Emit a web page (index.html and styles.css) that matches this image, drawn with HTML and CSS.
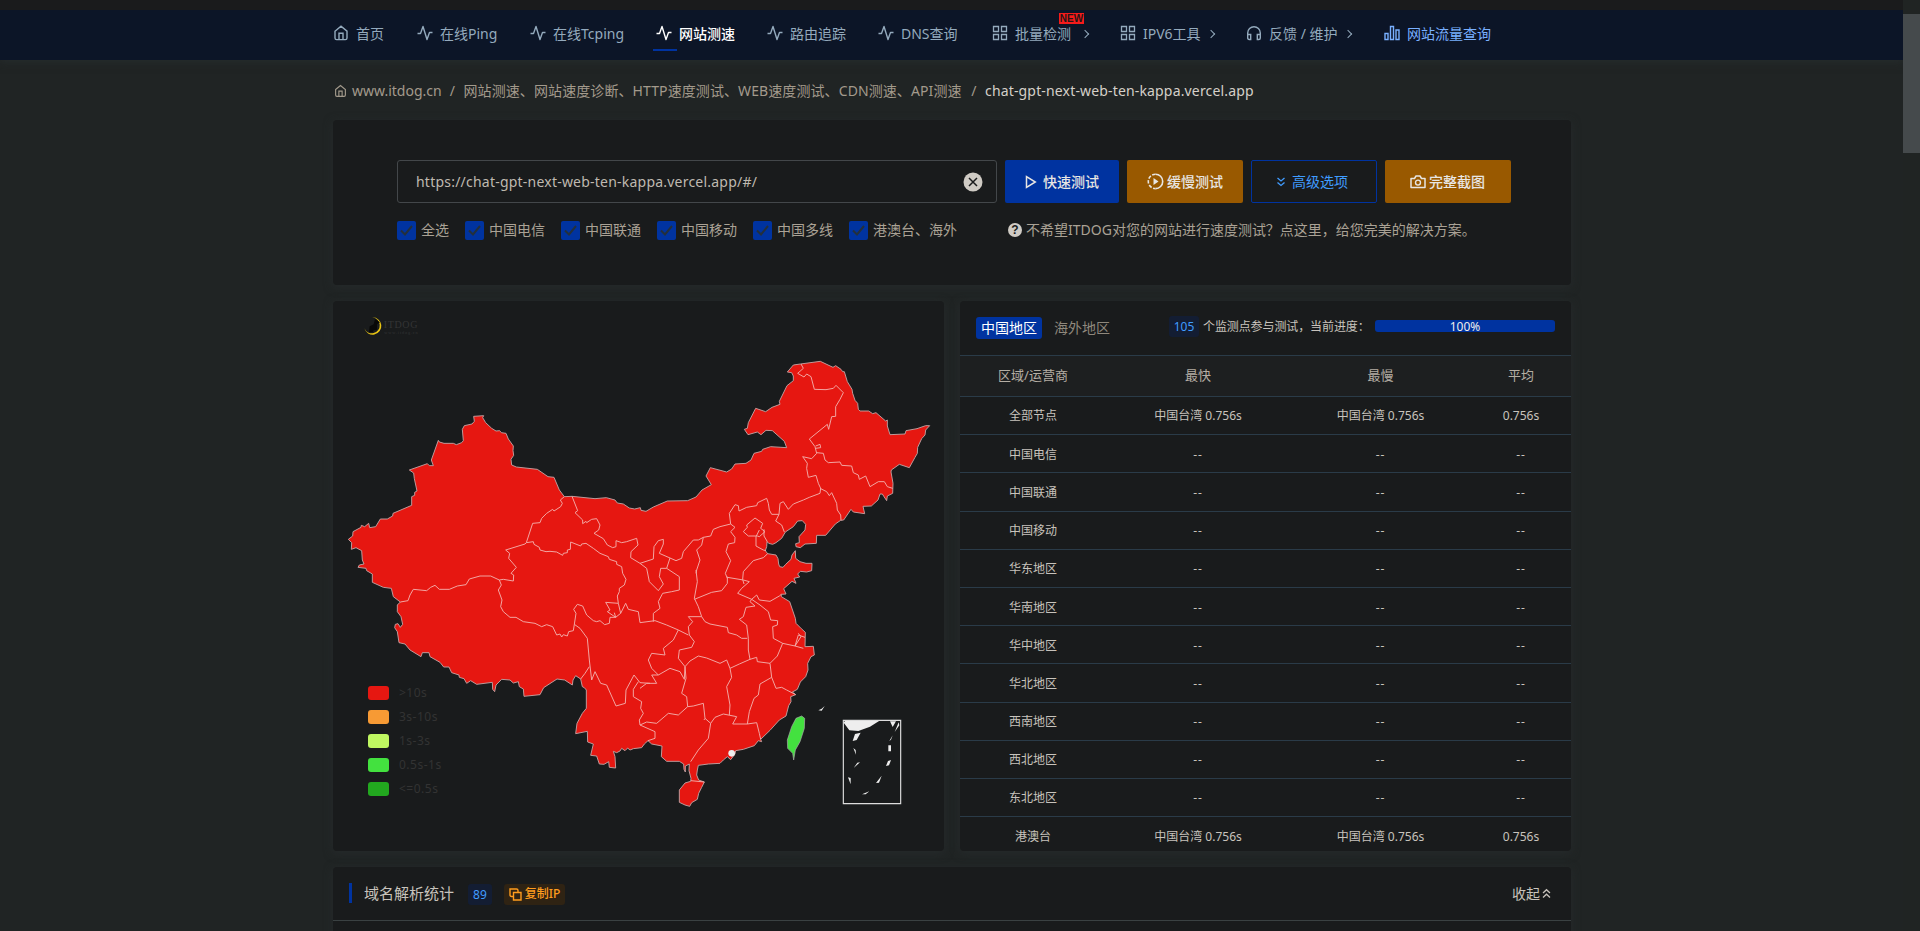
FILE: index.html
```html
<!DOCTYPE html>
<html lang="zh-CN">
<head>
<meta charset="utf-8">
<title>网站测速</title>
<link rel="stylesheet" href="styles.css">
</head>
<body>
<svg class="defs" width="0" height="0">
  <symbol id="home" viewBox="0 0 16 16"><path d="M2 6.2 8 1.2l6 5V13q0 1.6-1.6 1.6H3.600Q2 14.600 2 13zM6 14.500V8.200h4v6.300" fill="none" stroke="currentColor" stroke-width="1.400"/></symbol>
  <symbol id="pulse" viewBox="0 0 16 16"><path d="M.5 8.500h3L6 1.500l4 13 2.500-7H15.500" fill="none" stroke="currentColor" stroke-width="1.400" stroke-linejoin="round"/></symbol>
  <symbol id="grid" viewBox="0 0 16 16"><path d="M1.500 1.500h5v5h-5zM9.500 1.500h5v5h-5zM1.500 9.500h5v5h-5zM9.500 9.500h5v5h-5z" fill="none" stroke="currentColor" stroke-width="1.300"/></symbol>
  <symbol id="ear" viewBox="0 0 16 16"><path d="M1.700 12V8a6.300 6.300 0 0 1 12.600 0v4M1.700 9.500h3v5h-1.500q-1.500 0-1.500-1.500zM14.300 9.500h-3v5h1.500q1.500 0 1.500-1.500z" fill="none" stroke="currentColor" stroke-width="1.400"/></symbol>
  <symbol id="bars" viewBox="0 0 16 16"><path d="M1 8.500h3v6H1zM6.500 1.500h3v13h-3zM12 5h3v9.500h-3z" fill="none" stroke="currentColor" stroke-width="1.400"/></symbol>
  <symbol id="check" viewBox="0 0 19 19"><path d="M4 9.500 8 13.500 15 5" fill="none" stroke="#23303c" stroke-width="2"/></symbol>
</svg>
<div class="page">
<div class="content">
<header class="nav">
  <nav class="nav-list">
    <a class="item"><svg><use href="#home"/></svg><span>首页</span></a>
    <a class="item"><svg><use href="#pulse"/></svg><span>在线Ping</span></a>
    <a class="item"><svg><use href="#pulse"/></svg><span>在线Tcping</span></a>
    <a class="item active"><svg><use href="#pulse"/></svg><span>网站测速</span></a>
    <a class="item"><svg><use href="#pulse"/></svg><span>路由追踪</span></a>
    <a class="item"><svg><use href="#pulse"/></svg><span>DNS查询</span></a>
    <a class="item wide"><svg><use href="#grid"/></svg><span>批量检测</span><i class="arrow"></i><b class="new">NEW</b></a>
    <a class="item"><svg><use href="#grid"/></svg><span>IPV6工具</span><i class="arrow"></i></a>
    <a class="item"><svg><use href="#ear"/></svg><span>反馈 / 维护</span><i class="arrow"></i></a>
    <a class="item stats"><svg><use href="#bars"/></svg><span>网站流量查询</span></a>
  </nav>
</header>
<div class="crumbs"><svg><use href="#home"/></svg><span class="c1">www.itdog.cn</span><span class="sep">/</span><span class="c2">网站测速、网站速度诊断、HTTP速度测试、WEB速度测试、CDN测速、API测速</span><span class="sep">/</span><span class="c3">chat-gpt-next-web-ten-kappa.vercel.app</span></div>

<section class="card search">
  <div class="row">
    <div class="input"><span>https://chat-gpt-next-web-ten-kappa.vercel.app/#/</span>
      <svg class="clear" viewBox="0 0 20 20"><circle cx="10" cy="10" r="9.500" fill="#cfcbc4"/><path d="m6 6 8 8m0-8-8 8" stroke="#1a1b1c" stroke-width="1.500"/></svg></div>
    <button class="btn blue"><svg width="12" height="14" viewBox="0 0 12 14"><path d="M1.500 1.500v10.800L10.300 7z" fill="none" stroke="currentColor" stroke-width="1.500"/></svg>快速测试</button>
    <button class="btn orange slow"><svg width="17" height="17" viewBox="0 0 17 17"><path d="M8.500 1.200a7.200 7.200 0 0 1 0 14.400" fill="none" stroke="currentColor" stroke-width="1.600"/><path d="M8.500 1.200a7.200 7.200 0 0 0 0 14.400" fill="none" stroke="currentColor" stroke-width="1.600" stroke-dasharray="3.400 1.600"/><path d="M6.500 5v7l5-3.500z" fill="currentColor"/></svg>缓慢测试</button>
    <button class="btn outline"><svg width="10" height="12" viewBox="0 0 10 12"><path d="m1.500 2 3.500 3 3.500-3m-7 4.500L5 9.500l3.500-3" fill="none" stroke="currentColor" stroke-width="1.300"/></svg>高级选项</button>
    <button class="btn orange shot"><svg width="16" height="14" viewBox="0 0 16 14"><path d="M1 3.500h3.500l1.500-2.500h4l1.500 2.500H15V12.500H1z" fill="none" stroke="currentColor" stroke-width="1.500" stroke-linejoin="round"/><circle cx="8" cy="7.600" r="2.500" fill="none" stroke="currentColor" stroke-width="1.400"/></svg>完整截图</button>
  </div>
  <div class="options">
    <label class="first"><i><svg><use href="#check"/></svg></i>全选</label>
    <label><i><svg><use href="#check"/></svg></i>中国电信</label>
    <label><i><svg><use href="#check"/></svg></i>中国联通</label>
    <label><i><svg><use href="#check"/></svg></i>中国移动</label>
    <label><i><svg><use href="#check"/></svg></i>中国多线</label>
    <label class="last"><i><svg><use href="#check"/></svg></i>港澳台、海外</label>
    <span class="help"><b>?</b><span>不希望ITDOG对您的网站进行速度测试？点这里，给您完美的解决方案。</span></span>
  </div>
</section>

<div class="columns">
<section class="card map">
<svg class="china" viewBox="9 3 1833 1650">
  <path d="M127 52a26 26 0 1 1-24 33a24 24 0 1 0 24-33" fill="#e8c413"/>
  <path d="M117 97l2-18 12-6 4-16 6 4 9 6-9 6v16l-10 2-3 6z" fill="#080808"/>
  <text x="161" y="84" class="brand">ITDOG</text><text x="163" y="102" class="brand-url">www.itdog.cn</text>
  <path class="land" d="M55 718 68 708 69 695 93 682 94 676 104 680 116 670 119 683 137 680 151 657 172 657 188 648 189 640 245 616 245 590 254 586 254 577 261 573 253 536 251 519 238 510 292 491 298 497 310 497 304 480 325 421 328 426 342 430 370 430 379 434 395 428 400 422 397 388 403 377 426 372 433 364 431 349 461 347 458 353 467 368 485 385 498 393 509 392 514 398 528 400 535 417 550 438 549 452 551 466 543 478 545 495 559 501 622 508 654 530 672 532 688 570 703 590 726 589 795 596 829 593 855 600 862 609 880 612 898 624 914 627 931 623 933 631 948 634 970 621 1012 603 1073 602 1098 591 1116 570 1144 554 1128 528 1141 503 1190 516 1205 507 1215 492 1248 490 1263 480 1272 460 1295 454 1298 448 1322 440 1370 443 1363 424 1327 392 1308 391 1293 404 1282 396 1254 404 1243 388 1252 385 1255 368 1277 325 1307 335 1326 322 1350 313 1348 304 1371 257 1390 242 1390 228 1385 218 1372 216 1390 195 1411 192 1471 184 1509 202 1517 197 1533 208 1538 215 1543 215 1552 245 1566 268 1568 280 1575 301 1583 310 1585 328 1590 333 1616 333 1628 341 1638 338 1667 363 1672 360 1672 378 1680 404 1725 402 1728 392 1761 386 1787 377 1799 377 1787 390 1785 405 1775 416 1763 442 1762 460 1755 472 1738 503 1708 493 1684 510 1683 516 1689 550 1688 580 1672 588 1670 602 1662 590 1657 582 1650 582 1644 600 1624 618 1599 619 1604 641 1570 636 1563 628 1541 660 1532 661 1516 672 1487 706 1460 706 1459 730 1425 732 1411 743 1398 740 1397 731 1408 728 1407 710 1425 690 1427 673 1417 662 1403 663 1390 680 1366 696 1355 715 1338 728 1328 733 1316 730 1311 725 1310 740 1306 752 1313 761 1338 765 1344 776 1346 792 1349 800 1359 802 1367 793 1383 778 1386 765 1396 752 1397 775 1410 785 1428 790 1446 790 1445 812 1430 816 1411 814 1403 822 1409 831 1392 835 1398 850 1386 844 1361 866 1368 882 1354 883 1354 890 1379 905 1396 955 1398 970 1414 986 1426 997 1425 1040 1450 1039 1453 1065 1443 1070 1433 1090 1434 1110 1427 1130 1411 1146 1402 1168 1387 1176 1397 1184 1382 1190 1383 1205 1376 1217 1368 1248 1348 1260 1320 1291 1292 1318 1295 1325 1285 1322 1273 1337 1240 1348 1217 1352 1215 1362 1202 1379 1192 1370 1180 1380 1170 1390 1135 1392 1105 1396 1102 1410 1100 1425 1106 1440 1123 1446 1115 1462 1106 1480 1102 1498 1085 1508 1079 1519 1065 1515 1048 1507 1048 1470 1065 1449 1082 1444 1083 1435 1077 1412 1078 1392 1066 1398 1066 1416 1062 1408 1061 1392 1048 1384 1010 1384 994 1370 996 1338 965 1332 954 1322 943 1332 935 1343 910 1346 900 1350 893 1344 885 1352 875 1345 870 1353 860 1358 850 1354 855 1370 857 1404 838 1402 836 1385 822 1393 808 1392 800 1368 782 1366 790 1332 773 1326 772 1294 737 1301 741 1270 757 1240 769 1225 769 1170 763 1163 757 1160 752 1137 737 1127 729 1140 727 1155 704 1140 681 1137 641 1163 630 1184 582 1189 580 1167 568 1160 565 1145 550 1149 540 1140 515 1138 498 1155 494 1175 488 1168 487 1147 440 1153 422 1142 410 1150 402 1136 388 1132 387 1125 365 1118 357 1101 341 1101 330 1087 300 1070 297 1058 277 1058 273 1070 240 1050 225 1032 207 1028 202 995 194 983 196 973 204 971 211 982 218 973 213 950 202 935 202 915 211 906 190 890 184 865 160 862 127 847 127 822 110 812 108 805 84 802 88 795 102 792 97 780 95 752 78 743 64 748 65 728z"/>
  <g class="border">
    <path d="M703 590 691 600 697 610 692 620 672 633 668 628 650 640 635 655 630 668 608 670 589 728 585 732 527 750 539 760 536 775 559 802 543 820 551 825 550 843 520 838 508 840 482 828 450 828 418 837 408 854 382 858 358 868 328 868 315 856 302 862 290 872 250 868 240 885 234 902 211 906"/>
    <path d="M589 728 610 725 612 733 628 742 630 750 648 755 660 754 680 756 698 766 700 760 712 758 712 750 721 748 722 726 752 738 755 732 768 730 790 745 810 760 835 770 838 778 860 785 860 793 875 800 878 820 888 838 883 855 868 865 868 875 862 888 865 910 827 907 840 930 832 935 857 952 853 938"/>
    <path d="M865 910 872 940 857 952 840 952 838 970 824 974 810 962 800 965 790 962 770 945 758 918 742 913 731 928 738 940 733 973 730 992 716 995 712 1008 700 1004 695 1011 690 1002 680 1005 668 980 650 974 635 980 615 970 580 965 558 952 540 952 520 935 512 920 516 900 505 870 514 855 508 840"/>
    <path d="M726 589 743 632 735 638 758 660 758 671 768 664 770 668 785 658 800 656 810 675 806 690 792 700 820 716 832 735 848 743 858 740 858 722 875 728 890 725 920 715 924 735 903 755 902 773 930 790 970 777 972 740 985 722 1000 718 1000 732 988 760 1020 774 1038 782 1055 775 1060 755 1090 720 1105 720 1120 712 1142 708 1150 688 1170 680 1202 672 1198 640 1215 614 1225 617 1227 633 1250 622 1280 617 1283 608 1310 595 1315 610 1318 630 1325 643 1347 643 1350 610 1360 605 1375 628 1390 612 1420 600 1438 592 1470 580 1472 565 1465 550 1458 526 1435 532 1430 505 1432 490 1418 470 1445 476 1460 460 1455 440 1438 417 1492 373 1496 388 1505 350 1517 349 1517 320 1530 298 1540 278 1518 256 1510 265 1488 269 1453 268 1443 230 1430 222 1422 231 1403 220 1420 205 1413 192"/>
    <path d="M872 940 887 910 895 928 925 935 930 968 975 962 1010 975 1045 990 1075 1005"/>
    <path d="M930 790 950 805 958 845 985 872 1000 852 988 830 992 805 1010 805 1048 830 1048 870 1025 875 998 880 985 905 990 925 970 940 970 965M1020 774 1010 805"/>
  </g>
  <g class="border" transform="translate(930 120)">
    <path d="M530 338 550 340 555 360 565 368 600 366 605 376 635 378 640 398 655 405 658 418 677 408 690 440 715 425 733 425 742 440 758 445M527 318 540 313 542 323 527 325"/>
    <path d="M540 445 560 455 568 467 575 458 590 490 592 510 602 525 603 541M417 523 407 543 425 555 433 576"/>
    <path d="M345 534 368 550 362 565 375 575 358 590 352 588 325 588 310 575 322 562 320 555zM372 568 372 588 382 605M358 570 348 590 348 618 370 630 378 632M383 641 370 653 340 662 310 695 308 718"/>
    <path d="M272 552 285 562 272 575 285 592 284 608 265 612 258 635 272 662 256 700 262 715M190 592 185 615 170 630 180 660 170 690 168 700"/>
  </g>
  <g class="border" transform="translate(930 780)">
    <path d="M168 30 172 65 163 115 175 140 185 170 145 170 158 185 145 200 148 225 163 245 155 262 118 270 115 295 135 320 133 358 120 335 90 325 55 345 35 325 25 300 35 280 75 285 70 265 100 240 115 210"/>
    <path d="M163 118 215 97 245 92 262 70 262 50M262 52 310 60 328 65 305 85 293 100 335 118 350 105 358 120 390 124 418 108 424 103M308 58 312 72"/>
    <path d="M185 170 195 185 210 192 262 202 265 218 290 225 305 235 322 235M335 118 330 125 345 138 318 142 310 170 298 178 320 195 325 235 325 270 330 298M335 118 360 135 385 155 392 180 413 182 412 195 398 200 400 235 428 250 465 258 475 225 495 232M475 220 483 230 465 258 490 265M428 250 412 288 390 310 395 352 408 385 425 382 440 390 467 404"/>
    <path d="M135 320 150 303 175 288 200 294 240 310 260 300 270 325 298 312 330 298 350 292 352 305 390 310M270 325 275 352 260 380 270 435 268 465M395 352 360 372 355 405 342 415 328 455 322 492 350 488 358 520 362 538"/>
    <path d="M135 320 138 355 125 400 140 410 143 440 160 438 190 430 195 475 212 490 225 472 250 462 290 470 278 492 322 492M195 475 192 480M212 490 205 535 175 570 152 605M143 440 115 465 85 460 50 490 20 486 0 495 45 515 45 535 24 542M55 345 35 345 50 370 20 370 0 385"/>
    <path d="M30 370 0 368-18 345-42 390-44 430-72 438-100 375-118 370-135 335-145 360-152 300-158 235-180 205-197 193M-152 320-165 340-178 357M-5 365-20 388-20 410 5 425 2 445 10 460-2 480 0 495"/>
    <path d="M153 662 193 666"/>
  </g>
  <g transform="translate(930 780)">
    <path d="M485 468 494 475 493 505 480 545 466 570 461 600 458 580 443 565 442 540 455 500 468 475z" fill="#43e13f" stroke="#aaa" stroke-width="2"/>
    <path d="M535 451 545 446 554 438 545 452z" fill="#eee"/><circle cx="275" cy="580" r="10" fill="#eee"/><path d="M610 487 621 480H722L690 500 655 513 628 511zM750 484H768L758 501zM764 516 776 487 778 496zM638 543 645 522 662 518 650 540zM748 543 758 526 753 539zM745 556h8v18h-8zM640 564 647 570 648 584zM641 624 652 608 660 607zM738 618 744 603 753 600 747 616zM624 652 632 654 632 673zM708 669 725 647 717 668zM666 703 688 694 677 703z" fill="#eee"/>
    <path d="M610 481H782V731H610z" fill="none" stroke="#ddd" stroke-width="3.500"/>
  </g>
</svg>
<ul class="legend"><li><i class="k1"></i>&gt;10s</li><li><i class="k2"></i>3s-10s</li><li><i class="k3"></i>1s-3s</li><li><i class="k4"></i>0.5s-1s</li><li><i class="k5"></i>&lt;=0.5s</li></ul>
</section>

<section class="card results">
  <div class="result-head"><span class="tab on">中国地区</span><span class="tab">海外地区</span><span class="count">105</span><span class="note">个监测点参与测试，当前进度：</span><span class="progress">100%</span></div>
  <div class="tr th"><span>区域/运营商</span><span>最快</span><span>最慢</span><span>平均</span></div>
  <div class="tr"><span>全部节点</span><span>中国台湾 0.756s</span><span>中国台湾 0.756s</span><span>0.756s</span></div>
  <div class="tr none"><span>中国电信</span><span>--</span><span>--</span><span>--</span></div>
  <div class="tr none"><span>中国联通</span><span>--</span><span>--</span><span>--</span></div>
  <div class="tr none"><span>中国移动</span><span>--</span><span>--</span><span>--</span></div>
  <div class="tr none"><span>华东地区</span><span>--</span><span>--</span><span>--</span></div>
  <div class="tr none"><span>华南地区</span><span>--</span><span>--</span><span>--</span></div>
  <div class="tr none"><span>华中地区</span><span>--</span><span>--</span><span>--</span></div>
  <div class="tr none"><span>华北地区</span><span>--</span><span>--</span><span>--</span></div>
  <div class="tr none"><span>西南地区</span><span>--</span><span>--</span><span>--</span></div>
  <div class="tr none"><span>西北地区</span><span>--</span><span>--</span><span>--</span></div>
  <div class="tr none"><span>东北地区</span><span>--</span><span>--</span><span>--</span></div>
  <div class="tr last-row"><span>港澳台</span><span>中国台湾 0.756s</span><span>中国台湾 0.756s</span><span>0.756s</span></div>
</section>
</div>

<section class="card dns">
  <div class="dns-head"><i class="mark"></i><h2>域名解析统计</h2><span class="count">89</span>
    <span class="copy"><svg width="13" height="13" viewBox="0 0 13 13"><path d="M4.500 4.500h7.500v7.500H4.500zM4 8.500H2.500Q1 8.500 1 7V1h6.500Q9 1 9 2.500V4" fill="none" stroke="currentColor" stroke-width="1.400"/></svg>复制IP</span>
    <span class="fold">收起<svg width="9" height="11" viewBox="0 0 9 11"><path d="M1 5 4.500 1.700 8 5M1 9.500 4.500 6.200 8 9.500" fill="none" stroke="currentColor" stroke-width="1.300"/></svg></span></div>
</section>
</div>
<div class="scroll"><i></i></div>
</div>
</body>
</html>
```
FILE: styles.css
```css
* { box-sizing: border-box; }
body { margin: 0; background: #202424; color: #c8c3bc; font: 14px/20px "Noto Sans", "Noto Sans CJK SC", sans-serif; }
.defs { position: absolute; }
.page { display: flex; height: 931px; overflow: hidden; }
.content { width: 1903px; height: 931px; overflow: hidden; }
.scroll { width: 17px; padding-top: 14px; background: #202423; }
.scroll i { display: block; height: 139px; background: #454a4c; }

.nav { height: 60px; border-top: 10px solid #1a1b1c; background: #0c1527; padding-left: 333px; box-shadow: 0 2px 8px #262c2d; }
.nav-list { display: flex; height: 50px; }
.item { position: relative; display: flex; align-items: center; height: 47px; width: 112px; color: #94aabd; white-space: nowrap; }
.item svg { width: 16px; height: 16px; margin: -2px 7px 0 0; flex: none; }
.item:nth-child(1) { width: 84px; }
.item:nth-child(2) { width: 113px; }
.item:nth-child(3) { width: 126px; }
.item:nth-child(4), .item:nth-child(5) { width: 111px; }
.item:nth-child(6) { width: 114px; }
.item:nth-child(7) { width: 128px; }
.item:nth-child(8) { width: 126px; }
.item:nth-child(9) { width: 138px; }
.item:nth-child(8) span { letter-spacing: 0; }
.item.active { color: #fff; font-weight: 500; }
.item.active::after { content: ""; position: absolute; left: -3px; bottom: 6px; width: 24px; height: 2px; background: #0033a0; }
.item.stats { color: #79b0ff; }
.arrow { width: 6px; height: 6px; margin-left: 7px; border: solid currentColor; border-width: 1.3px 1.3px 0 0; transform: rotate(45deg); }
.wide .arrow { margin-left: 11px; }
.new { position: absolute; left: 67px; top: 3px; width: 25px; height: 11px; background: #f51b1b; color: #241616; font: bold 10px/11px "Liberation Sans", sans-serif; text-align: center; }

.crumbs { display: flex; align-items: center; height: 60px; padding: 2px 0 0 334px; color: #a39a8c; white-space: nowrap; }
.crumbs svg { width: 13px; height: 14px; margin-right: 5px; }
.c1 { width: 89px; }
.c2 { width: 499px; letter-spacing: .09px; }
.sep { width: 22.5px; text-align: center; }
.c3 { color: #d5d0c9; letter-spacing: .16px; }

.card { background: #191b1c; border-radius: 4px; box-shadow: 0 2px 10px #262b2c; }
.search { width: 1238px; height: 165px; margin-left: 333px; padding: 40px 60px 0 64px; }
.row { display: flex; height: 43px; }
.input { width: 600px; border: 1px solid #43474a; border-radius: 3px; display: flex; align-items: center; justify-content: space-between; padding: 0 13px 0 18px; margin-right: 8px; color: #bfb9b0; letter-spacing: .22px; }
.clear { width: 20px; height: 20px; }
.btn { display: flex; align-items: center; justify-content: center; gap: 6px; border: 0; border-radius: 2px; padding: 0; font: inherit; font-weight: 500; color: #e8e6e3; }
.blue { width: 114px; background: #0033a0; margin-right: 8px; }
.slow { width: 116px; margin-right: 8px; gap: 3px; }
.orange { background: #995900; }
.outline { width: 126px; border: 1px solid #0033a0; background: none; color: #409cff; margin-right: 8px; padding-right: 4px; font-weight: 400; }
.shot { width: 126px; gap: 3px; padding-right: 1px; }
.options { display: flex; margin-top: 17px; height: 20px; align-items: center; color: #aaa295; white-space: nowrap; }
.options label { display: flex; align-items: center; width: 96px; }
.options label.first { width: 68px; }
.options label.last { width: 159px; }
.options i { width: 19px; height: 19px; margin-right: 5px; background: #0033a0; border-radius: 2px; }
.options i svg { display: block; width: 19px; height: 19px; }
.help { display: flex; align-items: center; gap: 4px; }
.help b { width: 14px; height: 14px; border-radius: 7px; background: #cfcbc4; color: #191b1c; font: bold 12px/14px "Liberation Sans", sans-serif; text-align: center; }

.columns { display: flex; gap: 16px; margin: 16px 0 16px 333px; height: 550px; }
.columns .card { width: 611px; height: 550px; position: relative; overflow: hidden; }
.china { display: block; width: 611px; height: 550px; }
.land { fill: #e61711; stroke: #c3a3a3; stroke-width: 2.800; stroke-linejoin: round; }
.border { fill: none; stroke: #f3aaa7; stroke-width: 2.900; stroke-linejoin: round; }
.brand { font: 30px "Liberation Serif", serif; fill: #333435; letter-spacing: 2px; }
.brand-url { font: 13px "Liberation Serif", serif; fill: #333435; letter-spacing: 2.500px; }
.legend { position: absolute; left: 35px; top: 385px; margin: 0; padding: 0; list-style: none; font-size: 12px; color: #333; letter-spacing: .5px; }
.legend li { display: flex; align-items: center; gap: 10px; height: 14px; margin-bottom: 10px; line-height: 12px; padding-bottom: 1px; }
.legend i { width: 21px; height: 14px; border-radius: 3px; margin-bottom: -1px; }
.k1 { background: #e61711; }
.k2 { background: #f79a34; }
.k3 { background: #bff761; }
.k4 { background: #43e13f; }
.k5 { background: #22a81f; }

.result-head { display: flex; height: 54px; padding: 16px 0 0 16px; white-space: nowrap; }
.tab { height: 22px; line-height: 22px; padding: 0 5px; margin-right: 7px; border-radius: 3px; color: #8f887c; }
.tab.on { background: #0033a0; color: #fff; }
.count { height: 21px; line-height: 21px; padding: 0 5px; border-radius: 3px; background: #131d33; color: #409cff; font-size: 12px; }
.result-head .count { margin: -1px 0 0 47px; width: 30px; padding: 0; text-align: center; }
.note { width: 172px; margin-left: 4px; font-size: 12px; line-height: 20px; letter-spacing: -.1px; }
.progress { width: 180px; height: 12px; margin-top: 3px; border-radius: 3px; background: #0033a0; color: #eee; font-size: 12px; line-height: 13px; text-align: center; }
.tr { display: grid; grid-template-columns: 146px 184px 181px 100px; align-items: center; height: 38.200px; border-top: 1px solid #2a3b48; font-size: 12px; text-align: center; }
.none, .last-row { padding-top: 2px; }
.none span + span { letter-spacing: 1px; }
.th { height: 41px; padding-bottom: 2px; background: #1d1f20; color: #b5aea4; font-size: 13px; }

.dns { width: 1238px; height: 80px; margin-left: 333px; }
.dns-head { display: flex; align-items: center; height: 54px; padding: 0 20px 0 16px; border-bottom: 1px solid #3a4142; white-space: nowrap; }
.mark { width: 3px; height: 20px; margin: -2px 12px 0 0; background: #0033a0; }
.dns h2 { margin: -1px 14px 0 0; font-size: 15px; font-weight: 400; }
.dns .count { margin-top: 1px; }
.copy { display: flex; align-items: center; gap: 3px; height: 21px; margin: 1px 0 0 12px; padding: 0 5px; border-radius: 3px; background: #2f2313; color: #ff9d1e; font-size: 12px; font-weight: 500; }
.fold { display: flex; align-items: center; gap: 2px; margin-left: auto; }
```
